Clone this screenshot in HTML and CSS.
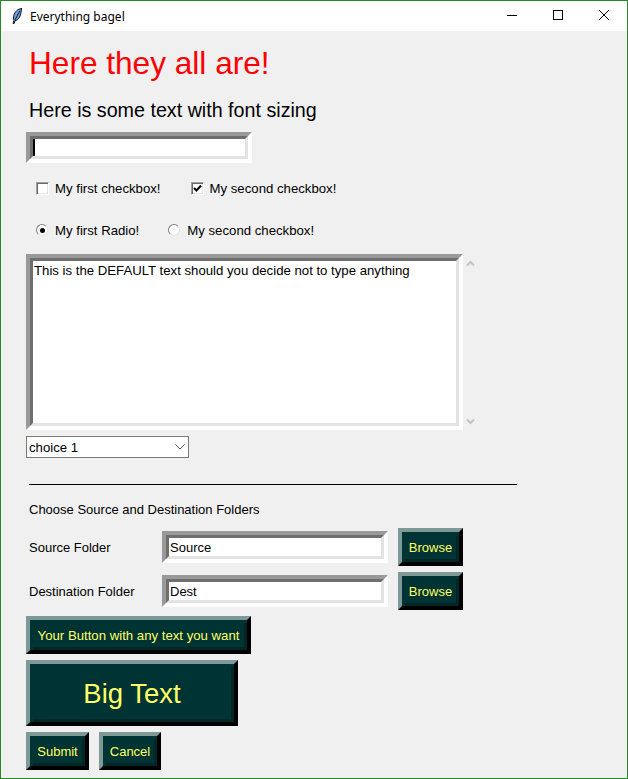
FILE: index.html
```html
<!DOCTYPE html>
<html lang="en">
<head>
<meta charset="utf-8">
<title>Everything bagel</title>
<link rel="stylesheet" href="styles.css">
</head>
<body>
<div class="window">
  <header class="titlebar">
    <svg class="feather" width="10" height="16" viewBox="0 0 10 16" aria-hidden="true">
      <path d="M9.500.5C6 .8 2.800 3.600 1.800 7.400 1.300 9.400 1.400 11 2 12.200L1 15.500l1 .3 1-3c2.800-.5 4.600-3 5.400-5.800.6-2.200 1.100-4.400 1.100-7Z" fill="#6f9fdc" stroke="#14141f" stroke-width="1"/>
      <path d="M7.800 2.800 3 12" stroke="#0c1830" stroke-width="1" fill="none"/>
    </svg>
    <span class="title">Everything bagel</span>
    <div class="controls">
      <svg class="ctl" width="46" height="30" viewBox="0 0 46 30" aria-hidden="true"><path d="M18 14.500h10" stroke="#000" fill="none"/></svg>
      <svg class="ctl" width="46" height="30" viewBox="0 0 46 30" aria-hidden="true"><rect x="18.500" y="9.500" width="9" height="9" stroke="#000" fill="none"/></svg>
      <svg class="ctl" width="46" height="30" viewBox="0 0 46 30" aria-hidden="true"><path d="M18 9l10 10M28 9 18 19" stroke="#000" fill="none"/></svg>
    </div>
  </header>
  <main class="content">
    <div class="heading">Here they all are!</div>
    <div class="subheading">Here is some text with font sizing</div>
    <div class="sunken entry-main"><div class="sunken-in"><span class="caret"></span></div></div>
    <div class="options check-row">
      <label class="opt opt-c1"><span class="box"></span>My first checkbox!</label>
      <label class="opt"><span class="box checked"><svg width="9" height="9" viewBox="0 0 9 9" aria-hidden="true"><path d="M1 4l2.500 2.500L8 1.500" stroke="#000" stroke-width="2" fill="none"/></svg></span>My second checkbox!</label>
    </div>
    <div class="options radio-row">
      <label class="opt opt-r1"><span class="radio on"></span>My first Radio!</label>
      <label class="opt"><span class="radio"></span>My second checkbox!</label>
    </div>
    <div class="text-row">
      <div class="sunken textbox"><div class="sunken-in textbox-in">This is the DEFAULT text should you decide not to type anything</div></div>
      <div class="scroll">
        <svg width="9" height="7" viewBox="0 0 9 7" aria-hidden="true"><path d="M1 5.500l3.500-3.500L8 5.500" stroke="#c4c4c4" stroke-width="2" fill="none"/></svg>
        <svg width="9" height="7" viewBox="0 0 9 7" aria-hidden="true"><path d="M1 1.500 4.500 5 8 1.500" stroke="#c4c4c4" stroke-width="2" fill="none"/></svg>
      </div>
    </div>
    <div class="combo"><span>choice 1</span>
      <svg width="10" height="6" viewBox="0 0 10 6" aria-hidden="true"><path d="M.5.500 5 5 9.500.500" stroke="#555" fill="none"/></svg>
    </div>
    <div class="rule"></div>
    <div class="folder-title">Choose Source and Destination Folders</div>
    <div class="folder-row first">
      <span class="folder-label">Source Folder</span>
      <div class="sunken entry-folder"><div class="sunken-in folder-in">Source</div></div>
      <button class="btn browse">Browse</button>
    </div>
    <div class="folder-row">
      <span class="folder-label">Destination Folder</span>
      <div class="sunken entry-folder"><div class="sunken-in folder-in">Dest</div></div>
      <button class="btn browse">Browse</button>
    </div>
    <button class="btn wide">Your Button with any text you want</button>
    <button class="btn big">Big Text</button>
    <div class="actions">
      <button class="btn submit">Submit</button>
      <button class="btn cancel">Cancel</button>
    </div>
  </main>
</div>
</body>
</html>
```
FILE: styles.css
```css
* { box-sizing: border-box; }
html, body { margin: 0; height: 100%; }
body { font-family: "Liberation Sans", Arial, sans-serif; font-size: 13px; color: #000; overflow: hidden; }
.window { width: 628px; height: 779px; border: 1px solid #228b22; background: #f0f0f0; display: flex; flex-direction: column; overflow: hidden; }
.titlebar { height: 30px; flex: none; background: #fff; display: flex; align-items: center; }
.feather { margin-left: 11px; }
.title { margin-left: 8px; font-family: "Noto Sans", sans-serif; font-size: 12px; }
.controls { margin-left: auto; display: flex; }
.ctl { display: block; }
.content { padding-left: 25px; flex: 1; display: flex; flex-direction: column; align-items: flex-start; }
.heading { color: #f00; font-size: 31.6px; line-height: 38px; margin: 13px 0 0 3px; }
.subheading { font-size: 19.7px; line-height: 24px; margin: 16px 0 0 3px; }
.sunken { border: 4px solid; border-color: #999 #fff #fff #999; }
.sunken-in { border: 3px solid; border-color: #6e6e6e #e3e3e3 #e3e3e3 #6e6e6e; background: #fff; height: 100%; }
.entry-main { width: 226px; height: 31px; margin-top: 10px; }
.caret { display: block; width: 2px; height: 17px; background: #000; }
.options { display: flex; height: 20px; align-items: center; font-size: 13.2px; }
.check-row { margin-top: 15px; margin-left: 10px; }
.radio-row { margin-top: 22px; margin-left: 10px; }
.opt { display: flex; align-items: center; line-height: 16px; padding-top: 1px; }
.opt-c1 { margin-right: 30px; }
.opt-r1 { margin-right: 29px; }
.box { width: 13px; height: 13px; margin-top: -1px; border: 1px solid; border-color: #a0a0a0 #fff #fff #a0a0a0; box-shadow: inset 1px 1px 0 #696969, inset -1px -1px 0 #e3e3e3; background: #fff; margin-right: 6px; display: flex; align-items: center; justify-content: center; }
.box svg { display: block; }
.radio { width: 12px; height: 12px; margin-top: -1px; border-radius: 50%; border: 1px solid; border-color: #808080 #e3e3e3 #e3e3e3 #808080; background: #fff; margin-right: 7px; position: relative; }
.radio.on::after { content: ""; position: absolute; left: 2.500px; top: 2.500px; width: 5px; height: 5px; border-radius: 50%; background: #000; }
.text-row { display: flex; margin-top: 14px; }
.textbox { width: 437px; height: 176px; font-size: 13.2px; }
.textbox-in { padding: 2px 0 0 1px; line-height: 16px; }
.scroll { width: 15px; height: 176px; display: flex; flex-direction: column; justify-content: space-between; align-items: flex-end; padding: 6px 3px 5px 0; }
.scroll svg { display: block; }
.combo { width: 163px; height: 22px; margin-top: 6px; border: 1px solid #7a7a7a; background: #fff; display: flex; align-items: center; justify-content: space-between; padding: 0 3px 0 2px; font-size: 13.2px; }
.rule { width: 488px; height: 1px; background: #000; margin: 26px 0 0 3px; }
.folder-title { margin: 17px 0 0 3px; line-height: 16px; }
.folder-row { display: flex; align-items: center; height: 38px; margin-top: 6px; margin-left: 3px; }
.folder-row.first { margin-top: 10px; }
.folder-label { width: 133px; }
.entry-folder { width: 226px; height: 32px; margin-right: 10px; }
.folder-in { padding-left: 1px; line-height: 20px; }
.btn { display: block; margin: 0; padding: 0; font: inherit; color: #ffff66; background: #003333; border-style: solid; border-width: 4px; border-color: #7f9999 #000 #000 #7f9999; box-shadow: inset 3px 3px 0 #003333, inset -3px -3px 0 #002626; }
.browse { width: 65px; height: 38px; }
.wide { width: 225px; height: 38px; margin-top: 6px; font-size: 13.2px; }
.big { width: 212px; height: 66px; margin-top: 6px; padding-top: 2px; font-size: 27.500px; }
.actions { display: flex; margin-top: 6px; }
.submit { width: 63px; height: 38px; margin-right: 10px; }
.cancel { width: 62px; height: 38px; }
```
